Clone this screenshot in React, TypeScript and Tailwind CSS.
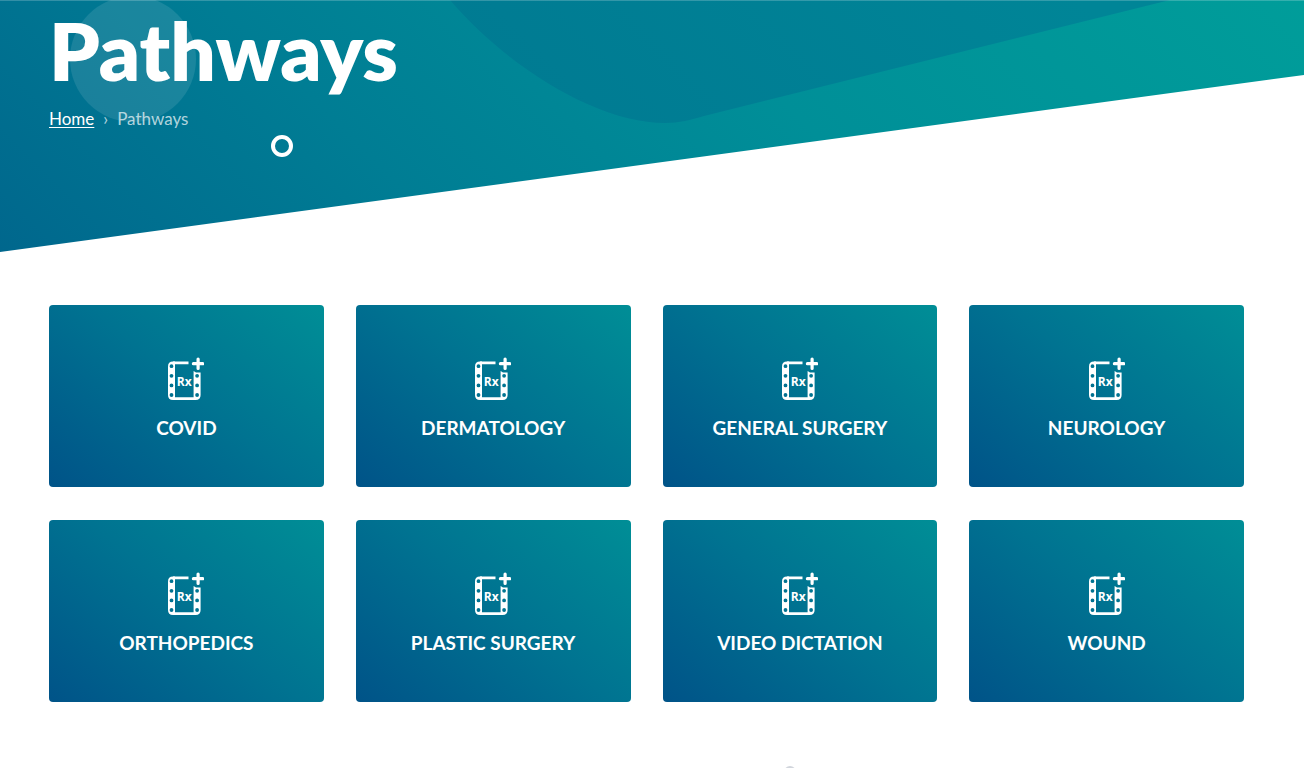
const pathways = [
  'COVID',
  'DERMATOLOGY',
  'GENERAL SURGERY',
  'NEUROLOGY',
  'ORTHOPEDICS',
  'PLASTIC SURGERY',
  'VIDEO DICTATION',
  'WOUND',
];

function HeroBackground() {
  return (
    <svg
      className="absolute inset-0 h-full w-full"
      viewBox="0 0 1304 252"
      preserveAspectRatio="none"
      aria-hidden="true"
    >
      <defs>
        <linearGradient id="hero" gradientUnits="userSpaceOnUse" x1="0" y1="252" x2="778" y2="-526">
          <stop offset="0" stopColor="#00678d" />
          <stop offset="0.3" stopColor="#007d94" />
          <stop offset="0.6" stopColor="#008f98" />
          <stop offset="1" stopColor="#009d9a" />
        </linearGradient>
        <linearGradient id="wave" gradientUnits="userSpaceOnUse" x1="480" y1="120" x2="840" y2="-240">
          <stop offset="0" stopColor="#007a92" />
          <stop offset="1" stopColor="#008597" />
        </linearGradient>
      </defs>
      <path d="M0 0H1304V75L0 252Z" fill="url(#hero)" />
      <path d="M450 0C510 70 600 123 665 123C680 123 690 120 704 116L1170 0Z" fill="url(#wave)" />
      <path d="M0 0H1304V1H0Z" fill="#fff" fillOpacity="0.2" />
    </svg>
  );
}

function RxIcon() {
  return (
    <svg width="36" height="44" viewBox="0 0 36 44" fill="none" aria-hidden="true">
      <path d="M5 5.9H20.5M5 41.6H28" stroke="#fff" strokeWidth="2.8" />
      <path
        fill="#fff"
        fillRule="evenodd"
        d="M5 4.5H7V43H5Q0 43 0 38V9.5Q0 4.5 5 4.5ZM1.6 9.2a1.9 1.9 0 1 0 3.8 0a1.9 1.9 0 1 0-3.8 0ZM1.6 18.8a1.9 1.9 0 1 0 3.8 0a1.9 1.9 0 1 0-3.8 0ZM1.6 28.4a1.9 1.9 0 1 0 3.8 0a1.9 1.9 0 1 0-3.8 0ZM1.6 38a1.9 1.9 0 1 0 3.8 0a1.9 1.9 0 1 0-3.8 0Z"
      />
      <path
        fill="#fff"
        fillRule="evenodd"
        d="M25.6 14L28 15.6H32.6V38Q32.6 43 27.6 43H25.6ZM27.2 18.8a1.9 1.9 0 1 0 3.8 0a1.9 1.9 0 1 0-3.8 0ZM27.2 28.4a1.9 1.9 0 1 0 3.8 0a1.9 1.9 0 1 0-3.8 0ZM27.2 38a1.9 1.9 0 1 0 3.8 0a1.9 1.9 0 1 0-3.8 0Z"
      />
      <path d="M30.1 2V11.4M25.4 6.7H34.8" stroke="#fff" strokeWidth="3.2" strokeLinecap="round" />
      <text x="16.3" y="28.5" textAnchor="middle" fill="#fff" className="font-['Open_Sans',sans-serif] text-[12px] font-bold">
        Rx
      </text>
    </svg>
  );
}

export default function App() {
  return (
    <div className="min-h-screen bg-white font-[Lato,sans-serif] text-white">
      <header className="relative h-[252px] overflow-hidden pl-[49px]">
        <HeroBackground />
        <div className="absolute top-[-4px] left-[70px] h-[126px] w-[126px] rounded-full bg-white/10" />
        <div className="absolute top-[135px] left-[271px] h-[22px] w-[22px] rounded-full border-4 border-white" />
        <div className="relative pt-2">
          <h1 className="text-[80px] leading-[84px] font-extrabold">Pathways</h1>
          <nav aria-label="Breadcrumb" className="mt-[15px] flex gap-[9px] text-[17px] leading-6">
            <a href="#" className="underline underline-offset-2">
              Home
            </a>
            <span className="text-white/70">›</span>
            <span className="text-white/70">Pathways</span>
          </nav>
        </div>
      </header>

      <main className="grid grid-cols-4 gap-x-8 gap-y-[33px] pt-[53px] pr-[60px] pl-[49px]">
        {pathways.map((name) => (
          <a
            key={name}
            href="#"
            className="flex h-[182px] flex-col items-center rounded bg-[linear-gradient(40deg,#005388_0%,#007391_52%,#008e96_100%)] pt-[52px]"
          >
            <RxIcon />
            <span className="mt-3 text-[19px] leading-[30px] font-bold">{name}</span>
          </a>
        ))}
      </main>

      <footer className="flex h-[66px] items-end pl-[784px]">
        <div className="h-[2px] w-3 overflow-hidden">
          <div className="h-3 w-3 rounded-full border-2 border-gray-300" />
        </div>
      </footer>
    </div>
  );
}
